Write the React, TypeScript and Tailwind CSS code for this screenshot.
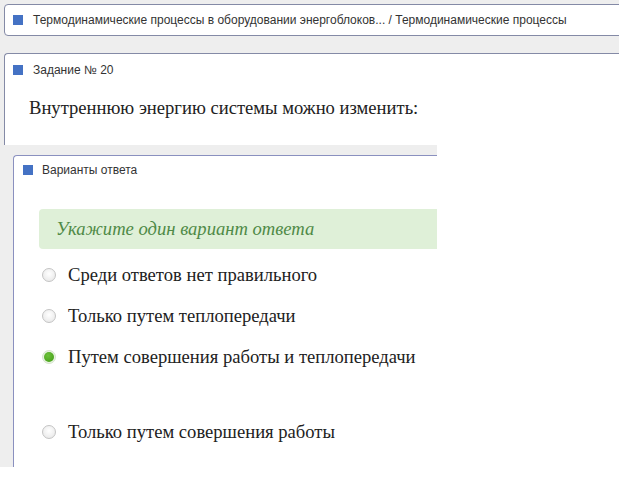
import React from "react";

const options = [
  { label: "Среди ответов нет правильного", checked: false },
  { label: "Только путем теплопередачи", checked: false },
  { label: "Путем совершения работы и теплопередачи", checked: true },
  { label: "Только путем совершения работы", checked: false },
];

function Marker() {
  return <span className="block w-[10px] h-[10px] bg-[#4472c4] shrink-0" />;
}

function Radio({ checked }: { checked: boolean }) {
  return checked ? (
    <span className="flex items-center justify-center w-[14px] h-[14px] rounded-full bg-[#e9f3e3] border border-[#d6e4cd] shrink-0">
      <span className="block w-[10px] h-[10px] rounded-full bg-[radial-gradient(circle_at_40%_35%,#6cc13a,#3f9a12)]" />
    </span>
  ) : (
    <span className="block w-[14px] h-[14px] rounded-full border border-[#c4c4c4] bg-[radial-gradient(circle_at_50%_40%,#ffffff,#e4e4e4)] shrink-0" />
  );
}

export default function App() {
  return (
    <div className="w-[619px] h-[504px] overflow-hidden bg-white font-['Liberation_Sans',Arial,sans-serif] text-[#333]">
      {/* breadcrumb and task header */}
      <div className="h-[145px] bg-[#eeeeee] pl-[4px] pt-[4px] overflow-hidden">
        <div className="h-[32px] mr-[-10px] rounded-[4px] border border-[#848aa6] bg-white flex items-center pl-[8px] gap-[10px] text-[12px]">
          <Marker />
          <span>Термодинамические процессы в оборудовании энергоблоков... / Термодинамические процессы</span>
        </div>
        <div className="mt-[17px] h-[120px] mr-[-10px] rounded-tl-[4px] border-l border-t border-[#848aa6] bg-white pl-[8px] pt-[11px]">
          <div className="flex items-center gap-[10px] text-[12px] h-[10px]">
            <Marker />
            <span>Задание № 20</span>
          </div>
          <div className="mt-[22px] pl-[16px] font-['Liberation_Serif','Times_New_Roman',serif] text-[18.6px] leading-[22px] text-[#222]">
            Внутреннюю энергию системы можно изменить:
          </div>
        </div>
      </div>

      {/* answer options */}
      <div className="flex">
        <div className="w-[437px] h-[322px] bg-[#eeeeee] pl-[13px] pt-[10px] overflow-hidden shrink-0">
          <div className="h-[330px] rounded-tl-[4px] border-l border-t border-[#8a90bf] bg-white pl-[9px] pt-[9px]">
            <div className="flex items-center gap-[9px] text-[12px] h-[10px]">
              <Marker />
              <span>Варианты ответа</span>
            </div>
            <div className="mt-[34px] ml-[16px] mr-[-20px] h-[40px] rounded-[4px] bg-[#dff0d8] flex items-center pl-[17px] font-['Liberation_Serif','Times_New_Roman',serif] italic text-[18.6px] text-[#4f8a47]">
              Укажите один вариант ответа
            </div>
            <div className="ml-[19px] font-['Liberation_Serif','Times_New_Roman',serif] text-[18.6px] text-[#222]">
              {options.map((o, i) => (
                <div
                  key={o.label}
                  className={
                    i === 0
                      ? "flex items-center gap-[12px] h-[22px] mt-[15px]"
                      : i === 3
                      ? "flex items-center gap-[12px] h-[22px] mt-[53px]"
                      : "flex items-center gap-[12px] h-[22px] mt-[19px]"
                  }
                >
                  <Radio checked={o.checked} />
                  <span>{o.label}</span>
                </div>
              ))}
            </div>
          </div>
        </div>
        <div className="flex-1 bg-white" />
      </div>
    </div>
  );
}
